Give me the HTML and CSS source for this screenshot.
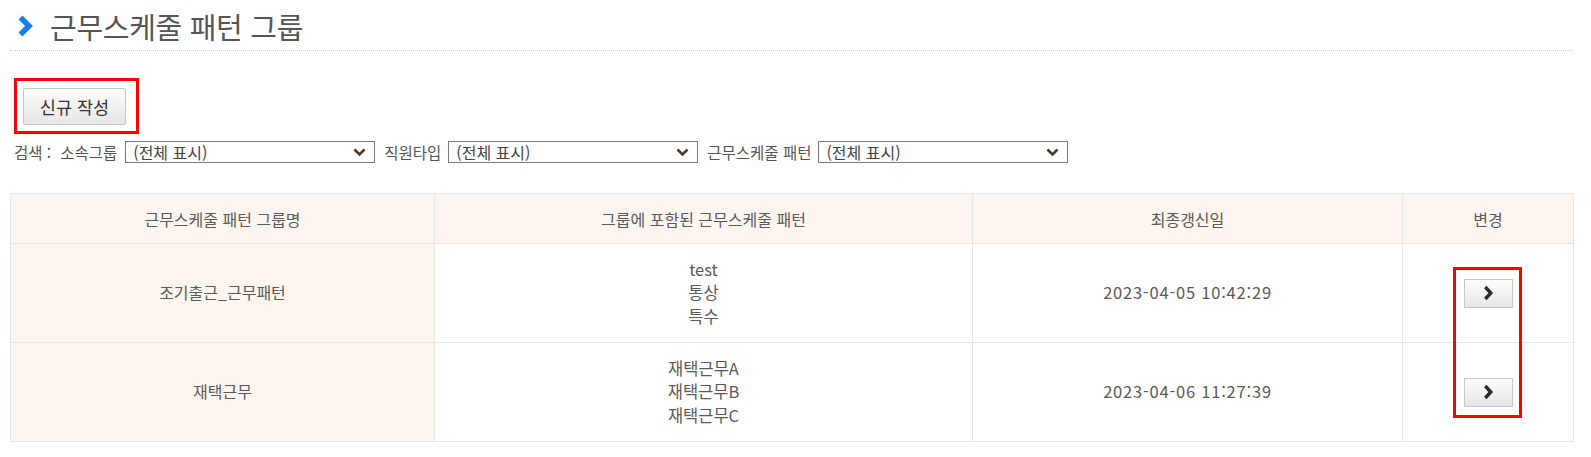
FILE: index.html
```html
<!DOCTYPE html>
<html lang="ko">
<head>
<meta charset="utf-8">
<link rel="stylesheet" href="styles.css">
</head>
<body>
<div class="page">
  <div class="title-bar">
    <svg class="title-icon" width="17" height="22" viewBox="0 0 17 22"><path d="M3.5 2.5 L12 11 L3.5 19.5" stroke="#1a7ee8" stroke-width="5.5" fill="none" stroke-linejoin="miter"/></svg>
    <h1 class="title">근무스케줄 패턴 그룹</h1>
  </div>

  <div class="new-wrap">
    <div class="mark-box">
      <button class="btn-new">신규 작성</button>
    </div>
  </div>

  <div class="search">
    <span class="lbl lbl-first">검색 :</span>
    <span class="lbl">소속그룹</span>
    <span class="sel"><select><option>(전체 표시)</option></select><svg class="caret" width="13" height="9" viewBox="0 0 13 9"><path d="M1.5 1.5 L6.5 6.5 L11.5 1.5" stroke="#4a3b2e" stroke-width="2.6" fill="none"/></svg></span>
    <span class="lbl">직원타입</span>
    <span class="sel"><select><option>(전체 표시)</option></select><svg class="caret" width="13" height="9" viewBox="0 0 13 9"><path d="M1.5 1.5 L6.5 6.5 L11.5 1.5" stroke="#4a3b2e" stroke-width="2.6" fill="none"/></svg></span>
    <span class="lbl">근무스케줄 패턴</span>
    <span class="sel"><select><option>(전체 표시)</option></select><svg class="caret" width="13" height="9" viewBox="0 0 13 9"><path d="M1.5 1.5 L6.5 6.5 L11.5 1.5" stroke="#4a3b2e" stroke-width="2.6" fill="none"/></svg></span>
  </div>

  <div class="table-wrap">
    <table class="grid">
      <colgroup>
        <col class="c1"><col class="c2"><col class="c3"><col class="c4">
      </colgroup>
      <thead>
        <tr><th>근무스케줄 패턴 그룹명</th><th>그룹에 포함된 근무스케줄 패턴</th><th>최종갱신일</th><th>변경</th></tr>
      </thead>
      <tbody>
        <tr>
          <td class="name">조기출근_근무패턴</td>
          <td class="pats">test<br>통상<br>특수</td>
          <td class="date">2023-04-05 10:42:29</td>
          <td><button class="btn-go"><svg width="12" height="16" viewBox="0 0 12 16"><path d="M3.3 2 L8.8 8 L3.3 14" stroke="#2b2b2b" stroke-width="3.4" fill="none"/></svg></button></td>
        </tr>
        <tr>
          <td class="name">재택근무</td>
          <td class="pats">재택근무A<br>재택근무B<br>재택근무C</td>
          <td class="date">2023-04-06 11:27:39</td>
          <td><button class="btn-go"><svg width="12" height="16" viewBox="0 0 12 16"><path d="M3.3 2 L8.8 8 L3.3 14" stroke="#2b2b2b" stroke-width="3.4" fill="none"/></svg></button></td>
        </tr>
      </tbody>
    </table>
    <div class="mark-col"></div>
  </div>
</div>
</body>
</html>
```
FILE: styles.css
```css
* { box-sizing: border-box; }
body {
  margin: 0;
  background: #fff;
  font-family: "Noto Sans CJK KR", "Noto Sans", sans-serif;
  color: #555;
}
.page {
  width: 1572px;
  padding-left: 10px;
}
.title-bar {
  display: flex;
  align-items: center;
  height: 51px;
  padding-left: 7px;
  padding-top: 2px;
  border-bottom: 1px dotted #c8c8c8;
}
.title-icon { display: block; margin-right: 16px; margin-top: -1px; }
.title {
  margin: 0;
  font-size: 29px;
  font-weight: 400;
  color: #555;
  letter-spacing: -0.3px;
  line-height: 1;
}
.new-wrap {
  padding-top: 27px;
  padding-left: 4px;
}
.mark-box {
  display: inline-block;
  border: 3px solid #ff0000;
  padding: 7px 10px 6px 6px;
}
.btn-new {
  display: block;
  width: 103px;
  height: 37px;
  border: 1px solid #c6c6c6;
  border-radius: 2px;
  background: linear-gradient(#fdfdfd, #e6e6e6);
  font-family: "Noto Sans CJK KR", sans-serif;
  font-size: 17.5px;
  color: #333;
  padding: 0;
}
.search {
  display: flex;
  align-items: center;
  padding-left: 4px;
  margin-top: 7px;
  height: 22px;
  font-size: 15.5px;
  color: #555;
}
.lbl { margin-right: 7px; margin-left: 9px; white-space: nowrap; }
.lbl-first { margin-left: 0; margin-right: 9px; }
.lbl-first + .lbl { margin-left: 0; margin-right: 8px; }
.sel {
  position: relative;
  display: block;
  width: 250px;
  height: 22px;
}
.sel select {
  appearance: none;
  -webkit-appearance: none;
  width: 100%;
  height: 22px;
  border: 1px solid #7a7a7a;
  border-radius: 0;
  background: #fff;
  font-family: "Noto Sans CJK KR", sans-serif;
  font-size: 16px;
  font-weight: 400;
  color: #444;
  padding: 0 0 0 7px;
  line-height: 20px;
}
.caret {
  position: absolute;
  right: 9px;
  top: 7px;
  pointer-events: none;
}
.table-wrap {
  position: relative;
  margin-top: 30px;
}
.grid {
  width: 1563px;
  border-collapse: collapse;
  table-layout: fixed;
  font-size: 16px;
  color: #5a5a5a;
}
.c1 { width: 424px; }
.c2 { width: 538px; }
.c3 { width: 430px; }
.c4 { width: 171px; }
.grid th, .grid td {
  border: 1px solid #e6e6e6;
  text-align: center;
  vertical-align: middle;
  font-weight: 400;
}
.grid th {
  height: 50px;
  background: #fdf5ef;
  font-size: 16px;
}
.grid td { height: 99px; line-height: 23.5px; }
.grid td.name { background: #fdf5ef; }
.grid td.pats { font-size: 16.5px; }
.grid td.date { font-size: 16.5px; letter-spacing: 0.8px; }
.btn-go {
  display: inline-flex;
  align-items: center;
  justify-content: center;
  width: 49px;
  height: 29px;
  padding: 0;
  border: 1px solid #c6c6c6;
  background: linear-gradient(#fdfdfd, #e6e6e6);
  vertical-align: middle;
}
.btn-go svg { display: block; }
.mark-col {
  position: absolute;
  left: 1443px;
  top: 74px;
  width: 69px;
  height: 151px;
  border: 3px solid #ff0000;
  pointer-events: none;
}
```
